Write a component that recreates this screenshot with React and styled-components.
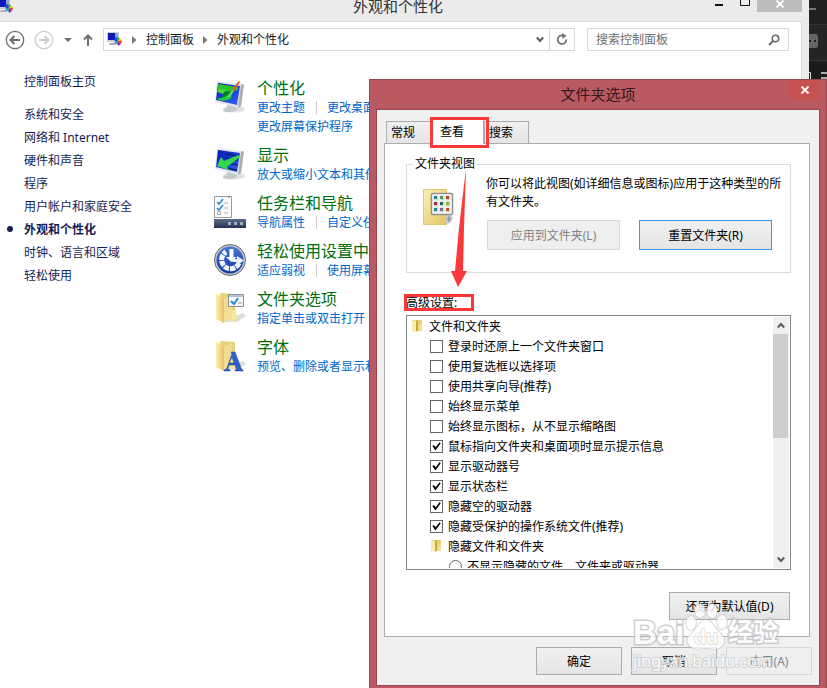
import React from "react";
import styled, { createGlobalStyle } from "styled-components";

const GlobalStyle = createGlobalStyle`
  * {
    box-sizing: border-box;
  }

  body {
    margin: 0;
    background: #ffffff;
    font-family: "Noto Sans", "Noto Sans CJK SC", sans-serif;
    font-size: 12px;
    color: #000000;
  }

  button,
  input {
    font: inherit;
    color: inherit;
    margin: 0;
    padding: 0;
  }

  ul {
    list-style: none;
    margin: 0;
    padding: 0;
  }

  svg {
    display: block;
    flex: none;
  }
`;

/* ---------- desktop and main window ---------- */

const Desktop = styled.div`
  position: relative;
  display: flex;
  min-height: 100vh;
  overflow: hidden;
`;

const Explorer = styled.main`
  flex: 1;
  min-width: 0;
  display: flex;
  flex-direction: column;
  padding-right: 7px;
  background: #ebebeb;
`;

const Backdrop = styled.aside`
  width: 18px;
  background: #1b1b1b;
`;

const TitleBar = styled.header`
  display: grid;
  grid-template-columns: 90px 1fr 96px;
  height: 21px;
`;

const Title = styled.h1`
  margin: 0;
  font-size: 15px;
  font-weight: 400;
  line-height: 12px;
  text-align: center;
  color: #333333;
`;

const WindowControls = styled.div`
  display: flex;
  justify-content: flex-end;
  align-items: flex-start;
`;

const WindowButton = styled.button`
  display: flex;
  justify-content: center;
  width: ${({ $wide }) => ($wide ? "45px" : "26px")};
  height: 12px;
  border: 0;
  background: ${({ $wide }) => ($wide ? "#bcbcbc" : "transparent")};
`;

const Client = styled.div`
  flex: 1;
  background: #ffffff;
  border-top: 1px solid #d9d9d9;
  border-right: 1px solid #d9d9d9;
`;

const NavBar = styled.nav`
  display: flex;
  align-items: center;
  padding: 6px 12px 0 5px;
`;

const NavButton = styled.button`
  display: flex;
  align-items: center;
  justify-content: center;
  width: ${({ $width }) => $width || 20}px;
  height: 23px;
  margin-right: 9px;
  border: 0;
  background: none;
`;

const AddressBar = styled.div`
  flex: 1;
  display: flex;
  align-items: center;
  height: 23px;
  margin-right: 12px;
  padding-left: 2px;
  border: 1px solid #d9d9d9;
`;

const Crumb = styled.a`
  font-size: 12px;
  line-height: 20px;
  color: #1a1a1a;
  text-decoration: none;
`;

const CrumbArrow = styled.span`
  display: flex;
  justify-content: center;
  width: 23px;
`;

const AddressButton = styled.button`
  display: flex;
  align-items: center;
  justify-content: center;
  width: ${({ $bordered }) => ($bordered ? "25px" : "18px")};
  height: 21px;
  border: 0;
  border-left: ${({ $bordered }) => ($bordered ? "1px solid #d9d9d9" : "0")};
  background: none;
`;

const Spacer = styled.div`
  flex: 1;
`;

const SearchBox = styled.label`
  display: flex;
  align-items: center;
  width: 202px;
  height: 23px;
  padding: 0 8px;
  border: 1px solid #d9d9d9;
`;

const SearchInput = styled.input`
  flex: 1;
  min-width: 0;
  border: 0;
  outline: 0;
  background: none;

  &::placeholder {
    color: #6d6d6d;
    opacity: 1;
  }
`;

const Columns = styled.div`
  display: flex;
`;

const Sidebar = styled.aside`
  width: 214px;
  flex: none;
  padding-top: 18px;
`;

const SideItem = styled.li`
  display: flex;
  align-items: center;
  height: 23px;
  margin-bottom: ${({ $home }) => ($home ? "10px" : "0")};

  &::before {
    content: "";
    width: 6px;
    height: 6px;
    margin: 0 11px 0 7px;
    border-radius: 50%;
    background: ${({ $active }) => ($active ? "#151c55" : "transparent")};
  }
`;

const SideLink = styled.a`
  color: #151c55;
  font-weight: ${({ $active }) => ($active ? 700 : 400)};
  text-decoration: none;
  white-space: nowrap;
`;

const Categories = styled.ul`
  flex: 1;
  padding-top: 27px;
`;

const Category = styled.li`
  display: flex;
  gap: 11px;
  margin-bottom: 9px;

  svg {
    margin-top: 3px;
  }
`;

const CategoryTitle = styled.a`
  display: block;
  font-size: 16px;
  line-height: 20px;
  color: #00700f;
  text-decoration: none;
  white-space: nowrap;
`;

const Links = styled.div`
  display: flex;
  align-items: center;
  gap: 11px;
  height: 19px;
`;

const TaskLink = styled.a`
  color: #0066cc;
  line-height: 19px;
  text-decoration: none;
  white-space: nowrap;

  & + & {
    padding-left: 10px;
    border-left: 1px solid #cccccc;
    line-height: 13px;
  }
`;

/* ---------- dialog ---------- */

const Dialog = styled.section`
  position: absolute;
  top: 79px;
  left: 369px;
  right: 0;
  padding: 0 6px 2px;
  border: 1px solid #96474f;
  background: #bb5963;
`;

const DialogBar = styled.header`
  display: grid;
  grid-template-columns: 1fr auto 1fr;
  height: 29px;
`;

const DialogTitle = styled.h2`
  grid-column: 2;
  margin: 0;
  font-size: 15px;
  font-weight: 400;
  line-height: 29px;
  color: #32191c;
`;

const CloseButton = styled.button`
  display: flex;
  align-items: center;
  justify-content: center;
  justify-self: end;
  width: 31px;
  height: 20px;
  border: 0;
  background: #c75050;
`;

const DialogBody = styled.div`
  padding: 9px 7px 10px;
  border: 1px solid #96474f;
  background: #f0f0f0;
`;

const Tabs = styled.div`
  display: flex;
  align-items: flex-end;
  height: 24px;
  padding-left: 2px;
`;

const Tab = styled.button`
  position: relative;
  width: ${({ $active }) => ($active ? "53px" : "45px")};
  height: ${({ $active }) => ($active ? "25px" : "22px")};
  margin-bottom: ${({ $active }) => ($active ? "-1px" : "0")};
  padding-left: ${({ $active }) => ($active ? "8px" : "4px")};
  border: 1px solid #acacac;
  border-bottom: 0;
  background: ${({ $active }) =>
    $active ? "#ffffff" : "linear-gradient(#f0f0f0, #e5e5e5)"};
  line-height: 20px;
  text-align: left;
  z-index: ${({ $active }) => ($active ? 1 : 0)};
`;

const Mark = styled.span`
  position: absolute;
  inset: ${({ $inset }) => $inset};
  border: 3px solid #fd3838;
  pointer-events: none;
`;

const TabPanel = styled.div`
  margin-right: 2px;
  padding: 12px 18px 16px 21px;
  border: 1px solid #acacac;
  background: #ffffff;
`;

const Group = styled.fieldset`
  min-width: 0;
  margin: 0;
  padding: 3px 0 22px 6px;
  border: 1px solid #dcdcdc;
`;

const Legend = styled.legend`
  padding: 0 2px;
  line-height: 16px;
`;

const GroupContent = styled.div`
  display: flex;
  align-items: flex-start;
  gap: 31px;
  padding-left: 9px;

  > svg {
    margin-top: 13px;
  }
`;

const Message = styled.p`
  margin: 0 0 9px;
  line-height: 18px;
`;

const ButtonRow = styled.div`
  display: flex;
  justify-content: flex-end;
  gap: ${({ $gap }) => $gap || 9}px;
  padding-right: ${({ $inset }) => $inset || 0}px;
`;

const Button = styled.button`
  width: ${({ $width }) => $width}px;
  height: ${({ $tall }) => ($tall ? "30px" : "28px")};
  border: 1px solid ${({ $focused }) => ($focused ? "#3399ff" : "#acacac")};
  background: linear-gradient(#f0f0f0, #e5e5e5);

  &:disabled {
    border-color: #d9d9d9;
    background: #efefef;
    color: #838383;
  }
`;

const ListLabel = styled.div`
  position: relative;
  width: 67px;
  margin: 21px 0 3px;
  line-height: 18px;
`;

const ListBox = styled.div`
  display: flex;
  height: 255px;
  margin-bottom: 22px;
  padding: 0 1px 1px 0;
  border: 1px solid #828790;
`;

const Options = styled.ul`
  flex: 1;
  overflow: hidden;
`;

const Option = styled.li`
  padding-left: ${({ $level }) => 4 + $level * 19}px;
`;

const OptionLabel = styled.label`
  display: flex;
  align-items: center;
  gap: 5px;
  height: 20px;
  white-space: nowrap;
`;

const Tick = styled.input`
  appearance: none;
  width: 13px;
  height: 13px;
  border: 1px solid #666666;
  border-radius: ${({ type }) => (type === "radio" ? "50%" : "0")};
  background: #ffffff;

  &:checked::before {
    content: "";
    display: block;
    height: 11px;
    background: #000000;
    clip-path: polygon(
      12% 48%,
      28% 44%,
      42% 62%,
      80% 14%,
      88% 26%,
      44% 86%,
      36% 86%
    );
  }
`;

const ScrollBar = styled.div`
  display: flex;
  flex-direction: column;
  width: 16px;
  margin-top: 1px;
  background: #f0f0f0;
`;

const ScrollButton = styled.button`
  display: flex;
  align-items: center;
  justify-content: center;
  height: 17px;
  border: 0;
  background: none;
`;

const ScrollTrack = styled.div`
  flex: 1;
`;

const ScrollThumb = styled.div`
  width: 15px;
  height: 104px;
  background: #cdcdcd;
`;

const Footer = styled.footer`
  margin-top: 10px;
`;

const ArrowOverlay = styled.svg`
  position: absolute;
  top: 88px;
  left: 80px;
  pointer-events: none;
`;

const Watermark = styled.div`
  position: absolute;
  right: 44px;
  bottom: 16px;
  display: flex;
  flex-direction: column;
  width: 149px;
  opacity: 0.8;
  pointer-events: none;
`;

const Brand = styled.div`
  display: flex;
  align-items: flex-end;
  height: 48px;
  color: #ffffff;
  font-family: "Liberation Sans", "Noto Sans CJK SC", sans-serif;
  font-size: 33px;
  font-weight: 700;
  line-height: 34px;
  -webkit-text-stroke: 3px #c2c2c2;
  paint-order: stroke fill;
`;

const BrandCjk = styled.span`
  font-size: 25px;
  line-height: 36px;
`;

const Address = styled.div`
  color: #ffffff;
  font-family: "Noto Sans", sans-serif;
  font-size: 16px;
  line-height: 22px;
  -webkit-text-stroke: 2px #cccccc;
  paint-order: stroke fill;
`;

/* ---------- drawings ---------- */

const PanelIcon = () => (
  <svg width="17" height="17" viewBox="0 0 17 17">
    <path d="M1 1h12v10H1z" fill="#c9cdd6" />
    <path d="M2 2h7v7H2z" fill="#1018b8" />
    <path d="M9 2h3v6H9z" fill="#8fa4d8" />
    <path d="M4 12h6v2H3z" fill="#a9acb2" />
    <path d="M7 8l4-2 1 4-2 1z" fill="#1848e0" />
    <path d="M11 6l3 1-2 3z" fill="#30b040" />
    <path d="M14 7l2 3-4 0z" fill="#f2c400" />
    <path d="M12 10h4l-1 3z" fill="#f04020" />
    <path d="M12 10l3 3-3 2z" fill="#9820a0" />
    <path d="M8 11l4-1v4z" fill="#20a0c0" />
  </svg>
);

const Cross = () => (
  <svg width="10" height="8" viewBox="0 0 10 8">
    <path d="M1.500 .5l7 7M8.500 .5l-7 7" stroke="#fff" strokeWidth="1.900" />
  </svg>
);

const RoundArrow = ({ color, forward }) => (
  <svg width="20" height="20" viewBox="0 0 20 20" fill="none" stroke={color}>
    <circle cx="10" cy="10" r="8.7" strokeWidth="1.3" />
    <path
      d={forward ? "M5 10h9M10.5 6l4 4-4 4" : "M15 10H6M9.5 6l-4 4 4 4"}
      strokeWidth="2"
    />
  </svg>
);

const Triangle = () => (
  <svg width="5" height="8" viewBox="0 0 5 8">
    <path d="M0 0l4.5 4L0 8z" fill="#7a7a7a" />
  </svg>
);

const Chevron = ({ up }) => (
  <svg width="8" height="7" viewBox="0 0 8 7">
    <path
      d={up ? "M.8 5.5L4 2l3.2 3.5" : "M.8 1.5L4 5l3.2-3.5"}
      fill="none"
      stroke="#5c5c5c"
      strokeWidth="2"
    />
  </svg>
);

const MonitorIcon = ({ brush }) => (
  <svg width="32" height="32" viewBox="0 0 32 32">
    <defs>
      <linearGradient id={brush ? "scrA" : "scrB"} x1="0" y1="0" x2=".8" y2="1">
        <stop offset="0" stopColor="#0a14b4" />
        <stop offset="1" stopColor="#2a5ff0" />
      </linearGradient>
    </defs>
    <ellipse cx="20" cy="28" rx="11" ry="3.500" fill="#e2e2e2" />
    <path d="M13 23l9 2 1 4q-7 4-14 1-1-1 4-3z" fill="#c4c7cb" />
    <path d="M3 0l26 3-4 24L1 21z" fill="#e4e5e8" />
    <path d="M29 3l1 1-3 21-3 2 3-23z" fill="#a9adb4" />
    <path
      d="M4 2l22 3-3 19L2 19z"
      fill={brush ? "url(#scrA)" : "url(#scrB)"}
    />
    {brush ? (
      <>
        <path d="M4 3l20 3v3l-9 2-11-2z" fill="#2fc32c" />
        <path d="M4 8l8 1-3 4-6-2z" fill="#48d83c" />
        <path d="M10 11l9-1-2 6-10 3z" fill="#0a7a26" />
        <path d="M4 17q5 1 10-3l4 2q-3 5-14 3z" fill="#1fcc38" />
        <path d="M23 2l2-2 1 1-6 9-2-1z" fill="#ef5330" />
        <path d="M18 9l2 1-4 6-3 0z" fill="#54e268" />
      </>
    ) : (
      <>
        <path d="M12 6l13 2M11 10l13 2M12 15l12 2M12 20l11 2" stroke="#0a2470" strokeWidth="1.600" />
        <path d="M24 7l2 2-13 10 2 3-12-4 4-9 3 4z" fill="#34d84c" />
      </>
    )}
  </svg>
);

const TaskbarIcon = () => (
  <svg width="32" height="32" viewBox="0 0 32 32">
    <defs>
      <linearGradient id="bar" x1="0" x2="0" y1="0" y2="1">
        <stop offset="0" stopColor="#5d6c8c" />
        <stop offset="1" stopColor="#253352" />
      </linearGradient>
    </defs>
    <path d="M.5 .5h17v21H.5z" fill="#fafafa" stroke="#9b9b9b" />
    <path d="M14 1h2" stroke="#d03030" />
    <path d="M3 6l2 2 4-5M3 12l2 2 4-5" fill="none" stroke="#2c8bd6" strokeWidth="1.6" />
    <path d="M3.500 15.500h3v3h-3z" fill="none" stroke="#aaa" />
    <path d="M10 7h4M10 12h4M10 17h4" stroke="#b0b0b0" />
    <path d="M0 23h32v9H0z" fill="url(#bar)" />
    <path d="M14 26h3v3h-3zM20 26h3v3h-3zM26 26h3v3h-3z" fill="#a5aebf" />
  </svg>
);

const EaseIcon = () => (
  <svg width="32" height="32" viewBox="0 0 32 32">
    <defs>
      <linearGradient id="ease" x1="0" x2="0" y1="0" y2="1">
        <stop offset="0" stopColor="#4a74d4" />
        <stop offset="1" stopColor="#1438a4" />
      </linearGradient>
    </defs>
    <circle cx="16" cy="16" r="15.500" fill="#c3c7cf" stroke="#666d7a" />
    <circle cx="16" cy="16" r="13.500" fill="url(#ease)" />
    <path
      d="M25 19A9 9 0 1 1 12 8"
      fill="none"
      stroke="#f4f7ff"
      strokeWidth="5"
      strokeDasharray="5.200 .9"
    />
    <path d="M15.500 5h4v8h3L17.500 18 12 13h3.500z" fill="#fff" />
    <path d="M19 15h4v-3l7 4.500-7 4.500v-3h-5z" fill="#e9efff" />
  </svg>
);

const FolderIcon = ({ font }) => (
  <svg width="32" height="32" viewBox="0 0 32 32">
    <defs>
      <linearGradient id={font ? "fdA" : "fdB"} x1="0" x2="1">
        <stop offset="0" stopColor="#fbf0b4" />
        <stop offset="1" stopColor="#e2c45c" />
      </linearGradient>
    </defs>
    <path d="M19 25l10-4 3 3-9 6H10z" fill="#d0d0d0" opacity=".7" />
    <path d="M6 1l15 1v23l-11 5z" fill="#ead27c" />
    <path d="M18 19l4-2 1 11-6 2z" fill="#f7e698" />
    <path d="M2 1l8 6v24l-8-4z" fill={font ? "url(#fdA)" : "url(#fdB)"} />
    <path d="M10 7l8-4v23l-8 5z" fill="#f1de92" />
    {font ? (
      <path
        d="M17 12h4l6 16q1 2 2 2v1h-8v-1q2 0 1-2l-1-3h-6l-1 3q0 2 2 2v1h-6v-1q2 0 3-2l5-14zM18 17l-3 6h5z"
        fill="#2c60cc"
        stroke="#1b3f96"
        strokeWidth=".5"
      />
    ) : (
      <>
        <path d="M14.500 2.500h15v12h-15z" fill="#f6f8fb" stroke="#8a9099" />
        <path d="M15 3h14v2H15z" fill="#b9c3d1" />
        <path d="M17 9l3 3 4-6" fill="none" stroke="#2688d0" strokeWidth="2" />
        <path d="M24 11h4" stroke="#999" />
      </>
    )}
  </svg>
);

const FolderViewIcon = () => (
  <svg width="33" height="38" viewBox="0 0 33 38">
    <defs>
      <linearGradient id="fv" x1="0" x2="1" y1="0" y2="1">
        <stop offset="0" stopColor="#fbf0b5" />
        <stop offset="1" stopColor="#e2c661" />
      </linearGradient>
    </defs>
    <path d="M1.500 1.500h23v35h-23z" fill="url(#fv)" stroke="#dfc872" />
    <path d="M24 28l4-2 3 4-3 5-4 1z" fill="#c9ccd2" />
    <path d="M25 31h4M27 28v6" stroke="#7b8796" />
    <rect x="9.500" y="5.500" width="21" height="21" rx="1" fill="#fff" stroke="#8e8e8e" strokeWidth="1.500" />
    {[8, 14, 20].map((y, row) =>
      [12, 18, 24].map((x, col) => (
        <g key={`${x}-${y}`}>
          <rect x={x - 0.5} y={y - 0.5} width="5" height="5" fill="#d6dad6" />
          <rect
            x={x}
            y={y}
            width="3"
            height="3"
            fill={
              [
                ["#287c9c", "#3fa060", "#b04818"],
                ["#a02840", "#207050", "#88b828"],
                ["#208090", "#7070a0", "#c05820"],
              ][row][col]
            }
          />
        </g>
      ))
    )}
  </svg>
);

const SmallFolder = () => (
  <svg width="13" height="14" viewBox="0 0 13 14">
    <path d="M1 1h10v11H1z" fill="#e9d27a" />
    <path d="M1 1l4 1v11l-4-1z" fill="#f8eca8" />
    <path d="M5 2l2-1v10l-2 2z" fill="#c9a83c" />
    <path d="M8 6l3-1v7H8z" fill="#f0de90" />
  </svg>
);

const BackdropDrawing = () => (
  <svg width="18" height="80" viewBox="0 0 18 80">
    <path d="M0 0h18v24H0z" fill="#202020" />
    <path d="M0 24h18v36H0z" fill="#252525" />
    <path d="M0 24.500h18M0 60.500h18" stroke="#353535" />
    <path d="M0 9h7" stroke="#777" strokeWidth="2" />
    <rect x="-5" y="34" width="14" height="14" rx="3" fill="#666" />
    <path d="M0 40h2v2H0zM5 40h2v2H5z" fill="#222" />
    <path d="M0 72.500h1.500V80" fill="none" stroke="#ddd" />
    <path d="M12 73h6M12 78h6" stroke="#aaa" strokeWidth="2" />
  </svg>
);

const Paw = () => (
  <svg width="44" height="48" viewBox="0 0 44 48">
    <g fill="#fff" stroke="#c2c2c2" strokeWidth="1.500">
      <ellipse cx="7" cy="21" rx="5" ry="7" />
      <ellipse cx="16" cy="9" rx="5" ry="7" />
      <ellipse cx="28" cy="9" rx="5" ry="7" />
      <ellipse cx="38" cy="20" rx="5" ry="7" />
      <path d="M22 18c6 0 8 7 13 12s7 8 4 13-10 4-17 3c-7 1-13 2-17-3s0-9 4-13 7-12 13-12z" />
    </g>
    <text
      x="22"
      y="42"
      textAnchor="middle"
      fontSize="20"
      fill="#fff"
      stroke="#c2c2c2"
    >
      du
    </text>
  </svg>
);

/* ---------- data ---------- */

const sideLinks = [
  "系统和安全",
  "网络和 Internet",
  "硬件和声音",
  "程序",
  "用户帐户和家庭安全",
  "外观和个性化",
  "时钟、语言和区域",
  "轻松使用",
];

const categories = [
  {
    title: "个性化",
    icon: <MonitorIcon brush />,
    links: [["更改主题", "更改桌面背景"], ["更改屏幕保护程序"]],
  },
  {
    title: "显示",
    icon: <MonitorIcon />,
    links: [["放大或缩小文本和其他项目"]],
  },
  {
    title: "任务栏和导航",
    icon: <TaskbarIcon />,
    links: [["导航属性", "自定义任务栏"]],
  },
  {
    title: "轻松使用设置中心",
    icon: <EaseIcon />,
    links: [["适应弱视", "使用屏幕"]],
  },
  {
    title: "文件夹选项",
    icon: <FolderIcon />,
    links: [["指定单击或双击打开"]],
  },
  {
    title: "字体",
    icon: <FolderIcon font />,
    links: [["预览、删除或者显示和"]],
  },
];

const options = [
  { level: 0, text: "文件和文件夹" },
  { level: 1, type: "checkbox", text: "登录时还原上一个文件夹窗口" },
  { level: 1, type: "checkbox", text: "使用复选框以选择项" },
  { level: 1, type: "checkbox", text: "使用共享向导(推荐)" },
  { level: 1, type: "checkbox", text: "始终显示菜单" },
  { level: 1, type: "checkbox", text: "始终显示图标，从不显示缩略图" },
  { level: 1, type: "checkbox", checked: true, text: "鼠标指向文件夹和桌面项时显示提示信息" },
  { level: 1, type: "checkbox", checked: true, text: "显示驱动器号" },
  { level: 1, type: "checkbox", checked: true, text: "显示状态栏" },
  { level: 1, type: "checkbox", checked: true, text: "隐藏空的驱动器" },
  { level: 1, type: "checkbox", checked: true, text: "隐藏受保护的操作系统文件(推荐)" },
  { level: 1, text: "隐藏文件和文件夹" },
  { level: 2, type: "radio", text: "不显示隐藏的文件、文件夹或驱动器" },
];

const ControlPanel = () => (
  <Explorer>
    <TitleBar>
      <svg width="14" height="15" viewBox="3 2 14 15">
        <PanelIcon />
      </svg>
      <Title>外观和个性化</Title>
      <WindowControls>
        <WindowButton aria-label="最小化">
          <svg width="10" height="12" viewBox="0 0 10 12">
            <path d="M1 5h8" stroke="#111" strokeWidth="2" />
          </svg>
        </WindowButton>
        <WindowButton aria-label="最大化">
          <svg width="10" height="12" viewBox="0 0 10 12">
            <path d="M.5 0v5.500h9V0" fill="none" stroke="#111" />
          </svg>
        </WindowButton>
        <WindowButton $wide aria-label="关闭">
          <Cross />
        </WindowButton>
      </WindowControls>
    </TitleBar>
    <Client>
      <NavBar>
        <NavButton aria-label="后退">
          <RoundArrow color="#6e6e6e" />
        </NavButton>
        <NavButton aria-label="前进">
          <RoundArrow color="#cccccc" forward />
        </NavButton>
        <NavButton $width={10} aria-label="最近浏览的位置">
          <svg width="8" height="4" viewBox="0 0 8 4">
            <path d="M0 0h8L4 4z" fill="#707070" />
          </svg>
        </NavButton>
        <NavButton $width={12} aria-label="向上">
          <svg width="10" height="12" viewBox="0 0 10 12">
            <path
              d="M5 12V2M1 5.500L5 1.500l4 4"
              fill="none"
              stroke="#6e6e6e"
              strokeWidth="2"
            />
          </svg>
        </NavButton>
        <AddressBar>
          <PanelIcon />
          <CrumbArrow>
            <Triangle />
          </CrumbArrow>
          <Crumb href="#">控制面板</Crumb>
          <CrumbArrow>
            <Triangle />
          </CrumbArrow>
          <Crumb href="#">外观和个性化</Crumb>
          <Spacer />
          <AddressButton aria-label="以前的位置">
            <Chevron />
          </AddressButton>
          <AddressButton $bordered aria-label="刷新">
            <svg width="12" height="13" viewBox="0 0 12 13">
              <path
                d="M7.500 2.600A4.300 4.300 0 1 0 10.300 6.500"
                fill="none"
                stroke="#6e6e6e"
                strokeWidth="1.700"
              />
              <path d="M6 0l4.500 2.800L6.500 6z" fill="#6e6e6e" />
            </svg>
          </AddressButton>
        </AddressBar>
        <SearchBox>
          <SearchInput aria-label="搜索" placeholder="搜索控制面板" />
          <svg width="12" height="12" viewBox="0 0 12 12">
            <circle cx="7.500" cy="4.500" r="3.300" fill="none" stroke="#6e6e6e" strokeWidth="1.600" />
            <path d="M5 7L1 11" stroke="#6e6e6e" strokeWidth="2" />
          </svg>
        </SearchBox>
      </NavBar>
      <Columns>
        <Sidebar>
          <ul>
            <SideItem $home>
              <SideLink href="#">控制面板主页</SideLink>
            </SideItem>
            {sideLinks.map((text) => {
              const active = text === "外观和个性化";
              return (
                <SideItem key={text} $active={active}>
                  <SideLink href="#" $active={active}>
                    {text}
                  </SideLink>
                </SideItem>
              );
            })}
          </ul>
        </Sidebar>
        <Categories>
          {categories.map((category) => (
            <Category key={category.title}>
              {category.icon}
              <div>
                <CategoryTitle href="#">{category.title}</CategoryTitle>
                {category.links.map((row) => (
                  <Links key={row[0]}>
                    {row.map((link) => (
                      <TaskLink key={link} href="#">
                        {link}
                      </TaskLink>
                    ))}
                  </Links>
                ))}
              </div>
            </Category>
          ))}
        </Categories>
      </Columns>
    </Client>
  </Explorer>
);

const FolderOptions = () => (
  <Dialog role="dialog" aria-labelledby="dialog-title">
    <DialogBar>
      <DialogTitle id="dialog-title">文件夹选项</DialogTitle>
      <CloseButton aria-label="关闭">
        <Cross />
      </CloseButton>
    </DialogBar>
    <DialogBody>
      <Tabs role="tablist">
        <Tab role="tab">常规</Tab>
        <Tab role="tab" aria-selected="true" $active>
          查看
          <Mark $inset="-3px -6px -4px -2px" />
        </Tab>
        <Tab role="tab">搜索</Tab>
      </Tabs>
      <TabPanel>
        <Group>
          <Legend>文件夹视图</Legend>
          <GroupContent>
            <FolderViewIcon />
            <div>
              <Message>
                你可以将此视图(如详细信息或图标)应用于这种类型的所有文件夹。
              </Message>
              <ButtonRow $gap={19} $inset={18}>
                <Button $width={133} $tall disabled>
                  应用到文件夹(L)
                </Button>
                <Button $width={133} $tall $focused>
                  重置文件夹(R)
                </Button>
              </ButtonRow>
            </div>
          </GroupContent>
        </Group>
        <ListLabel>
          高级设置:
          <Mark $inset="0 -1px 1px -2px" />
        </ListLabel>
        <ListBox>
          <Options>
            {options.map((option) => (
              <Option key={option.text} $level={option.level}>
                <OptionLabel>
                  {option.type ? (
                    <Tick type={option.type} defaultChecked={option.checked} />
                  ) : (
                    <SmallFolder />
                  )}
                  {option.text}
                </OptionLabel>
              </Option>
            ))}
          </Options>
          <ScrollBar>
            <ScrollButton aria-label="向上滚动">
              <Chevron up />
            </ScrollButton>
            <ScrollTrack>
              <ScrollThumb />
            </ScrollTrack>
            <ScrollButton aria-label="向下滚动">
              <Chevron />
            </ScrollButton>
          </ScrollBar>
        </ListBox>
        <ButtonRow $inset={1}>
          <Button $width={121}>还原为默认值(D)</Button>
        </ButtonRow>
      </TabPanel>
      <Footer>
        <ButtonRow>
          <Button $width={86}>确定</Button>
          <Button $width={86}>取消</Button>
          <Button $width={86} disabled>
            应用(A)
          </Button>
        </ButtonRow>
      </Footer>
    </DialogBody>
    <ArrowOverlay width="20" height="122" viewBox="0 0 20 122">
      <path d="M16 0L14 60l-1 43h4L8 119 1 103h4l4-43z" fill="#fd3838" />
    </ArrowOverlay>
    <Watermark>
      <Brand>
        <span>Bai</span>
        <Paw />
        <BrandCjk>经验</BrandCjk>
      </Brand>
      <Address>jingyan.baidu.com</Address>
    </Watermark>
  </Dialog>
);

const App = () => (
  <>
    <GlobalStyle />
    <Desktop>
      <ControlPanel />
      <Backdrop>
        <BackdropDrawing />
      </Backdrop>
      <FolderOptions />
    </Desktop>
  </>
);

export default App;
